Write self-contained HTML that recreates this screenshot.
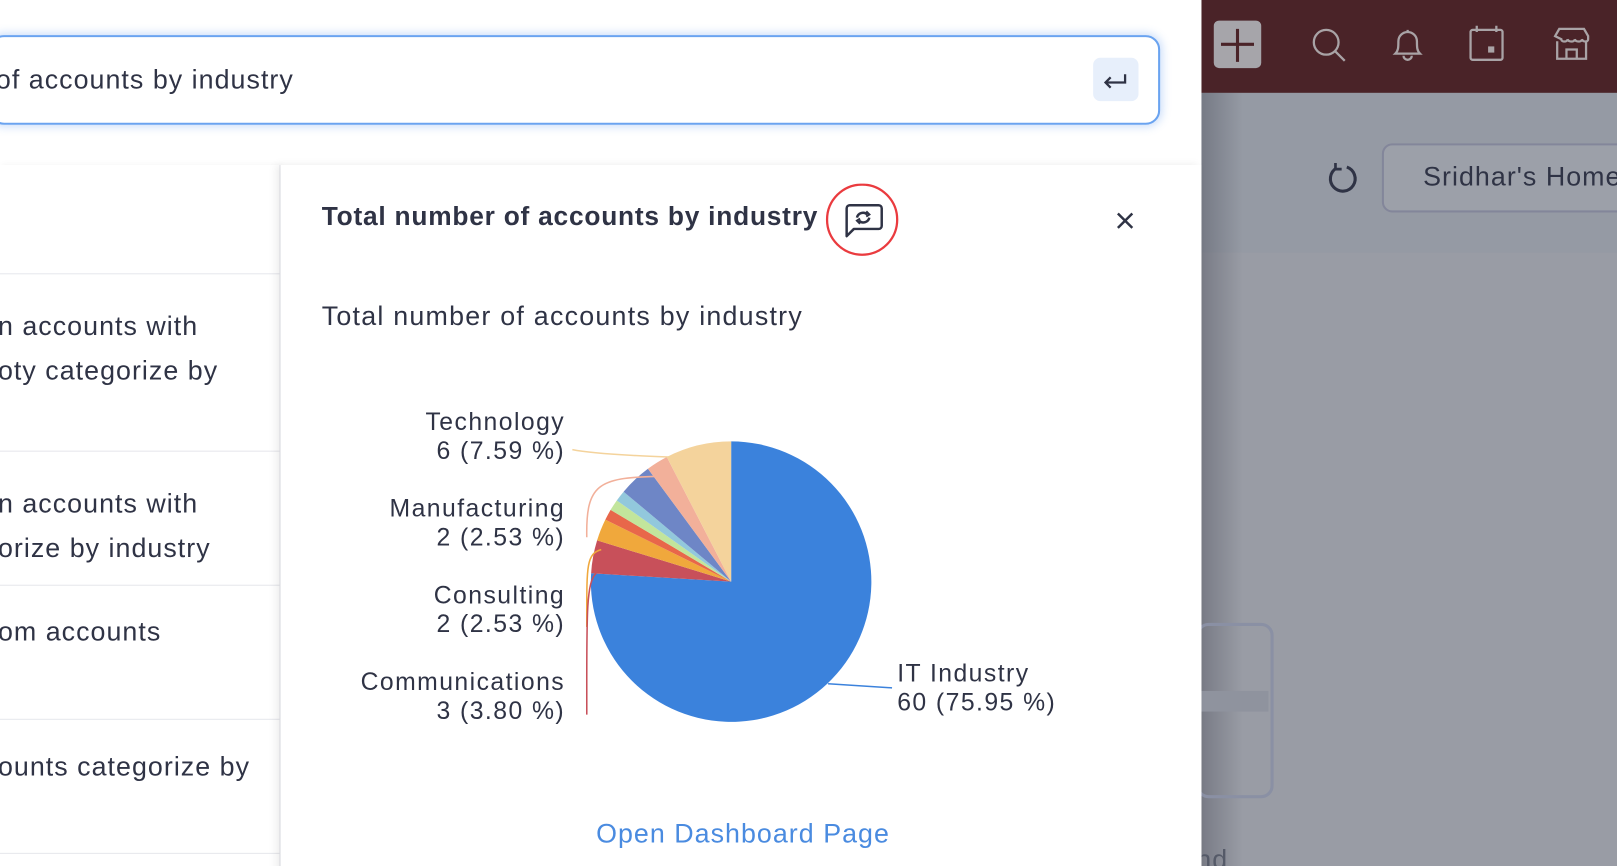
<!DOCTYPE html>
<html><head><meta charset="utf-8"><style>
*{margin:0;padding:0;box-sizing:border-box}
html,body{width:1617px;height:866px;overflow:hidden}
body{position:relative;background:#fff;font-family:"Liberation Sans",sans-serif;color:#2f3345}
#w{position:absolute;left:0;top:0;width:1568px;height:840px;transform:scale(1.03125);transform-origin:0 0}
.abs{position:absolute}
.t{font-size:26px;white-space:nowrap;letter-spacing:1px}
</style></head><body><div id="w">
<div class="abs" style="left:1165px;top:0;width:452px;height:866px;background:#999ca5"></div>
<div class="abs" style="left:1165px;top:90px;width:452px;height:155px;background:#959aa4"></div>
<div class="abs" style="left:1165px;top:0;width:452px;height:90px;background:#4a2328"></div>
<div class="abs" style="left:1165px;top:90px;width:40px;height:776px;background:linear-gradient(90deg,rgba(60,62,75,.35),rgba(60,62,75,0))"></div>
<div class="abs" style="left:1177px;top:20px;width:46px;height:46px;background:#a6a5aa;border-radius:5px"></div>
<svg class="abs" style="left:1165px;top:0" width="452" height="90" fill="none" stroke="#a9a3a6" stroke-width="2.2">
<path d="M35 28v32M19 43h32" stroke="#4a2328" stroke-width="3"/>
<circle cx="121" cy="41" r="12"/><path d="M130 50l9 9"/>
<path d="M188 52c3-3 3-6 3-12a9 9 0 0 1 18 0c0 6 0 9 3 12zM196 54a4 4 0 0 0 8 0M200 29v2"/>
<rect x="261" y="29" width="31" height="29" rx="2"/><path d="M267 25v6M286 25v6"/><rect x="278" y="45" width="6" height="6" fill="#a9a3a6" stroke="none"/>
<path d="M343 35l4-7h24l4 7v3c0 3-5 3-6 0c0 3-6 3-7 0c0 3-6 3-7 0c0 3-6 3-6 0zM345 40v17h28V40M354 57v-9h10v9"/>
</svg>
<svg class="abs" style="left:1285px;top:155px" width="36" height="36" fill="none" stroke="#2f3345" stroke-width="3"><path d="M11 8a12 12 0 1 0 10-1"/><path d="M10 3v6h6" stroke-width="2.6"/></svg>
<div class="abs" style="left:1340px;top:139px;width:300px;height:67px;border:2px solid #83869a;border-radius:10px;background:#9ca0a9"></div>
<div class="abs t" style="left:1380px;top:156px;color:#2f3345">Sridhar's Home</div>
<div class="abs" style="left:1160px;top:604px;width:75px;height:170px;border:3px solid #8a90a4;border-radius:12px"></div>
<div class="abs" style="left:1165px;top:670px;width:65px;height:20px;background:#8f939e"></div>
<div class="abs t" style="left:1160px;top:818px;color:#555a68">nd</div>

<div class="abs" style="left:0;top:0;width:1165px;height:866px;background:#fff"></div>
<div class="abs" style="left:-10px;top:34px;width:1135px;height:87px;border:2px solid #6aa3f0;border-radius:14px;box-shadow:0 0 8px 2px rgba(90,150,240,.3)"></div>
<div class="abs t" style="left:-4px;top:62px">of accounts by industry</div>
<div class="abs" style="left:1060px;top:56px;width:44px;height:42px;background:#e7effb;border-radius:7px"></div>
<svg class="abs" style="left:1060px;top:56px" width="44" height="42" fill="none" stroke="#2f3345" stroke-width="2.2"><path d="M31 16v8H12M17 19l-5 5 5 5"/></svg>

<div class="abs" style="left:0;top:160px;width:272px;height:706px;border-right:1px solid #e5e6ec;box-shadow:2px 0 6px rgba(0,0,0,.05)"></div>
<div class="abs" style="left:0;top:265px;width:272px;height:1px;background:#e6e7ec"></div>
<div class="abs" style="left:0;top:437px;width:272px;height:1px;background:#e6e7ec"></div>
<div class="abs" style="left:0;top:567px;width:272px;height:1px;background:#e6e7ec"></div>
<div class="abs" style="left:0;top:697px;width:272px;height:1px;background:#e6e7ec"></div>
<div class="abs" style="left:0;top:827px;width:272px;height:1px;background:#e6e7ec"></div>
<div class="abs t" style="left:-2px;top:295px;line-height:43px">n accounts with<br>oty categorize by</div>
<div class="abs t" style="left:-2px;top:467px;line-height:43px">n accounts with<br>orize by industry</div>
<div class="abs t" style="left:-2px;top:597px">om accounts</div>
<div class="abs t" style="left:-2px;top:728px">ounts categorize by</div>

<div class="abs" style="left:272px;top:160px;width:893px;height:706px;background:#fff;box-shadow:-4px 0 8px rgba(0,0,0,.08)"></div>
<div class="abs t" style="left:312px;top:196px;font-weight:bold;font-size:25.5px;letter-spacing:0.75px">Total number of accounts by industry</div>
<svg class="abs" style="left:800px;top:178px" width="72" height="72" fill="none">
<circle cx="36" cy="35" r="34" stroke="#ea3b3f" stroke-width="2.2"/>
<path d="M21 51V24a3 3 0 0 1 3-3h28a3 3 0 0 1 3 3v17a3 3 0 0 1-3 3H28z" stroke="#2f3345" stroke-width="2.4" stroke-linejoin="round"/>
<path d="M31 33a6 6 0 0 1 10-3M43 33a6 6 0 0 1-10 3" stroke="#2f3345" stroke-width="2.4"/>
<path d="M40 27l3 3-3 2M34 39l-3-3 3-2" stroke="#2f3345" stroke-width="2"/>
</svg>
<svg class="abs" style="left:1080px;top:203px" width="22" height="22" stroke="#2f3345" stroke-width="2.4"><path d="M4 4l14 14M18 4L4 18"/></svg>
<div class="abs t" style="left:312px;top:291px;letter-spacing:1.2px">Total number of accounts by industry</div>

<svg class="abs" style="left:0;top:0" width="1165" height="866">
<path d="M709 564L709 428A136 136 0 1 1 573.2 555.9Z" fill="#3b82dc"/>
<path d="M709 564L573.2 555.9A136 136 0 0 1 579 524Z" fill="#c8505a"/>
<path d="M709 564L579 524A136 136 0 0 1 587 503.9Z" fill="#f0a83c"/>
<path d="M709 564L587 503.9A136 136 0 0 1 592.1 494.4Z" fill="#e8674a"/>
<path d="M709 564L592.1 494.4A136 136 0 0 1 598.1 485.3Z" fill="#c2e59c"/>
<path d="M709 564L598.1 485.3A136 136 0 0 1 604.7 476.8Z" fill="#92c8dc"/>
<path d="M709 564L604.7 476.8A136 136 0 0 1 628.3 454.5Z" fill="#6e86c6"/>
<path d="M709 564L628.3 454.5A136 136 0 0 1 646.6 443.1Z" fill="#f2b09a"/>
<path d="M709 564L646.6 443.1A136 136 0 0 1 709 428Z" fill="#f4d39c"/>
<g fill="none" stroke-width="1.5">
<path d="M555 436C580 441 640 443 698 445" stroke="#f4d39c"/>
<path d="M569 521C568 470 580 463 637 462" stroke="#f2b09a"/>
<path d="M569 608C569 550 568 537 583 533" stroke="#f0a83c"/>
<path d="M569 693C569 600 568 565 578 556" stroke="#c8505a"/>
<path d="M803 663L865 667" stroke="#3b82dc"/>
</g>
<g font-family="Liberation Sans,sans-serif" font-size="24" fill="#2f3345" text-anchor="end" letter-spacing="1.4">
<text x="548" y="417">Technology</text><text x="548" y="445">6 (7.59 %)</text>
<text x="548" y="501">Manufacturing</text><text x="548" y="529">2 (2.53 %)</text>
<text x="548" y="585">Consulting</text><text x="548" y="613">2 (2.53 %)</text>
<text x="548" y="669">Communications</text><text x="548" y="697">3 (3.80 %)</text>
<text x="870" y="661" text-anchor="start">IT Industry</text><text x="870" y="689" text-anchor="start">60 (75.95 %)</text>
</g>
</svg>
<div class="abs t" style="left:578px;top:793px;color:#4a8be0">Open Dashboard Page</div>
</div></body></html>
